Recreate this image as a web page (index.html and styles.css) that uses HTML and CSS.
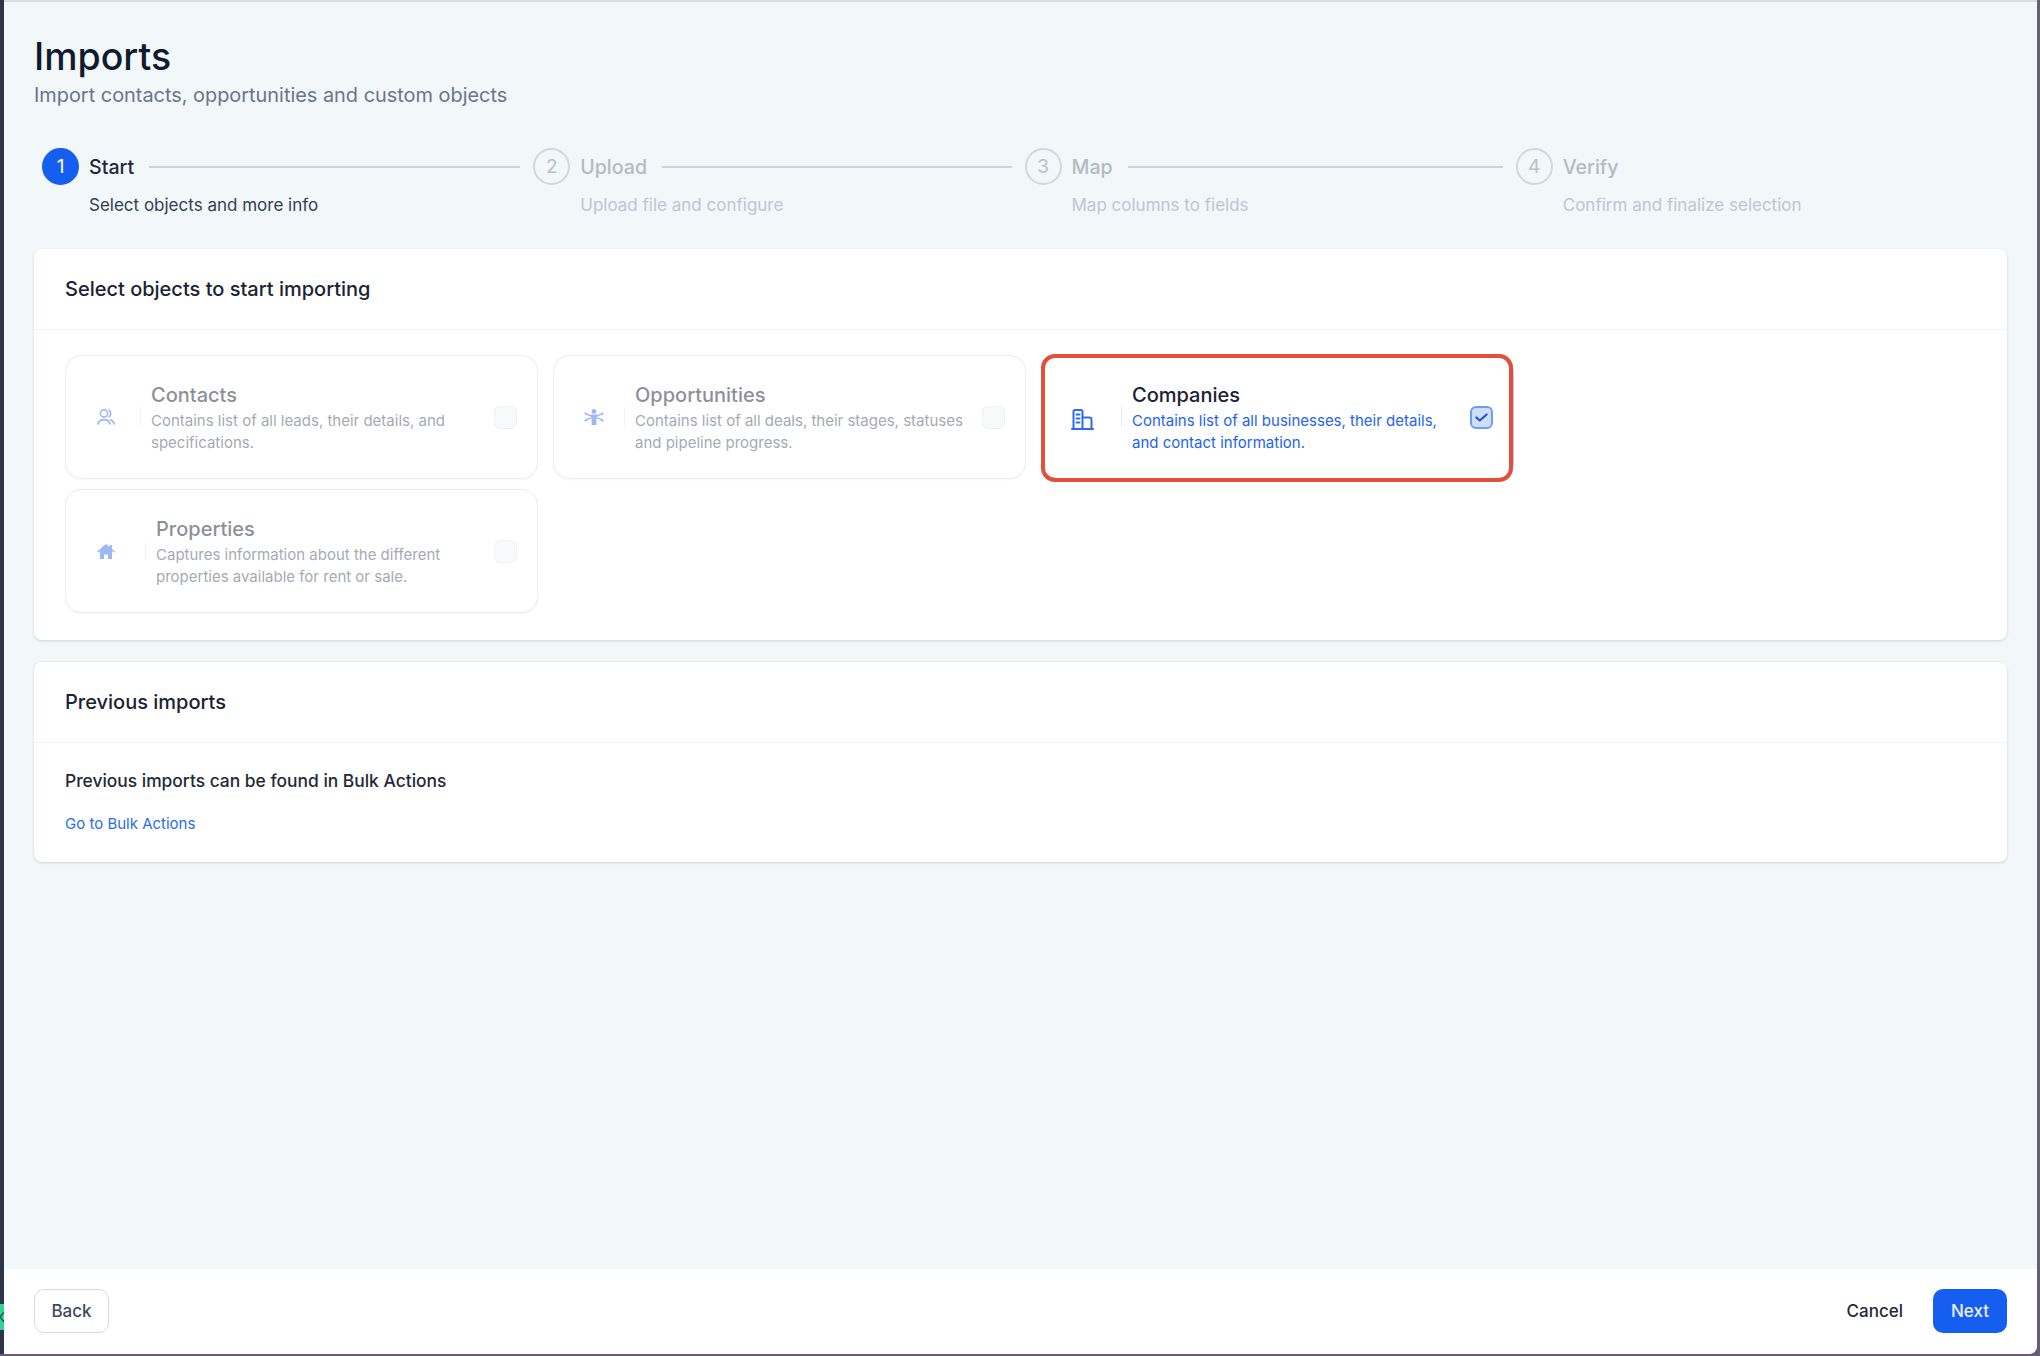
FILE: index.html
```html
<!DOCTYPE html>
<html lang="en">
<head>
    <meta charset="UTF-8">
    <meta name="viewport" content="width=device-width, initial-scale=1.0">
    <title>Imports</title>
    <link rel="stylesheet" href="styles.css">
</head>
<body>
<div class="window">
    <div class="side-tab"><svg viewBox="0 0 4 26" width="4" height="26"><path d="M4 8 L0 13 L4 18" fill="none" stroke="#1f5f4c" stroke-width="1.5"/></svg></div>
    <div class="main">
        <h1 class="title">Imports</h1>
        <div class="subtitle">Import contacts, opportunities and custom objects</div>

        <div class="steps">
            <div class="step active">
                <div class="step-head"><span class="step-num">1</span><span class="step-name">Start</span><span class="step-line"></span></div>
                <div class="step-desc">Select objects and more info</div>
            </div>
            <div class="step">
                <div class="step-head"><span class="step-num">2</span><span class="step-name">Upload</span><span class="step-line"></span></div>
                <div class="step-desc">Upload file and configure</div>
            </div>
            <div class="step">
                <div class="step-head"><span class="step-num">3</span><span class="step-name">Map</span><span class="step-line"></span></div>
                <div class="step-desc">Map columns to fields</div>
            </div>
            <div class="step">
                <div class="step-head"><span class="step-num">4</span><span class="step-name">Verify</span></div>
                <div class="step-desc">Confirm and finalize selection</div>
            </div>
        </div>

        <div class="card">
            <div class="card-header">Select objects to start importing</div>
            <div class="object-grid">
                <div class="object gap-contacts">
                    <div class="object-icon">
                        <svg viewBox="0 0 18 16" width="18" height="16" fill="none" stroke="#2563eb" stroke-width="1.6" stroke-linecap="round"><circle cx="7" cy="4.5" r="3.6"/><path d="M12 1.2a4 4 0 0 1 0 6.6"/><path d="M0.8 15c1-3 3.4-4.4 6.2-4.4s5.200 1.400 6.200 4.400"/><path d="M13.500 10.800c1.700.500 2.900 2 3.700 4.200"/></svg>
                    </div>
                    <span class="object-rule"></span>
                    <div class="object-text">
                        <div class="object-name">Contacts</div>
                        <div class="object-desc">Contains list of all leads, their details, and<br>specifications.</div>
                    </div>
                    <span class="check"></span>
                </div>
                <div class="object gap-opps">
                    <div class="object-icon">
                        <svg viewBox="0 0 20 16" width="20" height="16" fill="#2563eb"><circle cx="10" cy="2.400" r="2.400"/><path d="M6.800 5.600h6.400l-.8 5v5.400h-4.800v-5.400z"/><path d="M0 3.400l3.400.5-1.400 2.800zM20 3.400l-3.400.5 1.400 2.800zM0 12.400l3.400-.5-1.400-2.800zM20 12.400l-3.400-.5 1.400-2.800z"/><path d="M2.500 5.200l4.500 1.800M17.500 5.200l-4.500 1.800M2.500 10.600l4.500-1.800M17.500 10.600l-4.500-1.800" stroke="#2563eb" stroke-width="1.400"/></svg>
                    </div>
                    <span class="object-rule"></span>
                    <div class="object-text">
                        <div class="object-name">Opportunities</div>
                        <div class="object-desc">Contains list of all deals, their stages, statuses<br>and pipeline progress.</div>
                    </div>
                    <span class="check"></span>
                </div>
                <div class="object selected gap-wide">
                    <div class="object-icon">
                        <svg viewBox="0 0 23 21" width="23" height="21" fill="none" stroke="#2b6cf0" stroke-width="2" stroke-linecap="round" stroke-linejoin="round"><path d="M1 20h21"/><path d="M2.500 20V2.500a1.500 1.500 0 0 1 1.500-1.500h6a1.500 1.500 0 0 1 1.500 1.500V20"/><path d="M11.500 8.500h7a2 2 0 0 1 2 2V20"/><path d="M5.500 5.500h3M5.500 9.500h3M5.500 13.500h3"/></svg>
                    </div>
                    <span class="object-rule"></span>
                    <div class="object-text">
                        <div class="object-name">Companies</div>
                        <div class="object-desc">Contains list of all businesses, their details,<br>and contact information.</div>
                    </div>
                    <span class="check">
                        <svg viewBox="0 0 22 22" width="22" height="22" fill="none" stroke="#1d4fd8" stroke-width="2.400" stroke-linecap="round" stroke-linejoin="round"><path d="M5 11.500l4 3.500 8-7"/></svg>
                    </span>
                </div>
                <div class="object gap-wide">
                    <div class="object-icon">
                        <svg viewBox="0 0 18 15" width="18" height="15" fill="#2563eb"><path d="M9 0L0 7.500l1 1.200L3 7v8h4v-4.500h4V15h4V7l2 1.700 1-1.200-3-2.500V1h-2.500v1.900z"/></svg>
                    </div>
                    <span class="object-rule"></span>
                    <div class="object-text">
                        <div class="object-name">Properties</div>
                        <div class="object-desc">Captures information about the different<br>properties available for rent or sale.</div>
                    </div>
                    <span class="check"></span>
                </div>
            </div>
        </div>

        <div class="card">
            <div class="card-header">Previous imports</div>
            <div class="previous">
                <div class="previous-text">Previous imports can be found in Bulk Actions</div>
                <a class="previous-link" href="#">Go to Bulk Actions</a>
            </div>
        </div>
    </div>
    <div class="footer">
        <button type="button" class="btn btn-back">Back</button>
        <div class="footer-right">
            <button type="button" class="btn btn-cancel">Cancel</button>
            <button type="button" class="btn btn-next">Next</button>
        </div>
    </div>
</div>
</body>
</html>
```

FILE: styles.css
```css
* {
    box-sizing: border-box;
}
html, body {
    margin: 0;
    height: 100%;
}
body {
    background: #665f73;
    font-family: Inter, "Liberation Sans", sans-serif;
    color: #1a2233;
    overflow: hidden;
}
.window {
    position: relative;
    width: 2033px;
    height: 1354px;
    margin-left: 4px;
    display: flex;
    flex-direction: column;
    background: #f2f7fa;
    border-top: 2px solid #d9dde1;
    border-bottom-right-radius: 8px;
    box-shadow: -4px 0 0 #2d3648;
}
.side-tab {
    position: absolute;
    left: -4px;
    top: 1302px;
    width: 4px;
    height: 26px;
    background: #34d399;
    overflow: hidden;
}
.main {
    flex: 1;
    padding: 33px 30px 0 30px;
}
.title {
    margin: 0;
    font-size: 37.500px;
    line-height: 44px;
    font-weight: 500;
    color: #111a2e;
}
.subtitle {
    margin-top: 2px;
    font-size: 19.900px;
    line-height: 28px;
    color: #6b7489;
}

/* stepper */
.steps {
    display: grid;
    grid-template-columns: repeat(4, 1fr);
    margin-top: 39px;
    padding-left: 8px;
}
.step {
    padding-right: 13px;
}
.step-head {
    display: flex;
    align-items: center;
    height: 37px;
}
.step-num {
    flex: none;
    width: 37px;
    height: 37px;
    display: flex;
    align-items: center;
    justify-content: center;
    border: 2px solid #d3d8dc;
    border-radius: 50%;
    font-size: 19px;
    color: #b9c0c9;
}
.step-name {
    margin-left: 10px;
    font-size: 19.600px;
    font-weight: 500;
    color: #b4bac4;
}
.step-line {
    flex: 1;
    height: 2px;
    margin-left: 15px;
    background: #cdd3d8;
}
.step-desc {
    margin-top: 9px;
    padding-left: 47px;
    font-size: 17px;
    line-height: 22px;
    color: #c0c6cf;
}
.step.active .step-num {
    background: #155eef;
    border-color: #155eef;
    color: #fff;
}
.step.active .step-name {
    color: #1f2937;
}
.step.active .step-desc {
    color: #344054;
}

/* cards */
.card {
    margin-top: 33px;
    background: #fff;
    border-radius: 8px;
    box-shadow: 0 1px 3px rgba(16, 24, 40, .16);
}
.card + .card {
    margin-top: 22px;
}
.card-header {
    height: 81px;
    padding: 0 31px;
    display: flex;
    align-items: center;
    border-bottom: 1px solid #f1f3f5;
    font-size: 20px;
    font-weight: 500;
    color: #1a2233;
}
.object-grid {
    display: grid;
    grid-template-columns: repeat(3, 473px);
    grid-auto-rows: 124px;
    column-gap: 15px;
    row-gap: 10px;
    padding: 25px 31px 27px 31px;
}
.object {
    position: relative;
    display: flex;
    align-items: center;
    padding-left: 20px;
    background: #fff;
    border: 1px solid #eaecef;
    border-radius: 16px;
    box-shadow: 0 1px 2px rgba(16, 24, 40, .04);
}
.object-icon {
    flex: none;
    width: 40px;
    display: flex;
    justify-content: center;
    opacity: .45;
}
.object-rule {
    flex: none;
    width: 1px;
    height: 20px;
    background: #f1f3f5;
}
.gap-contacts .object-icon {
    margin-right: 14px;
}
.gap-opps .object-icon {
    margin-right: 10px;
}
.gap-wide .object-icon {
    margin-right: 19px;
}
.object-text {
    flex: 1;
    margin-left: 10px;
    opacity: .5;
}
.object-name {
    font-size: 20px;
    line-height: 29px;
    font-weight: 500;
    color: #1a2233;
}
.object-desc {
    font-size: 15px;
    line-height: 22px;
    color: #4a556b;
}
.check {
    flex: none;
    width: 23px;
    height: 23px;
    margin-right: 20px;
    display: flex;
    align-items: center;
    justify-content: center;
    background: #f8f9fa;
    border: 1px solid #eff1f3;
    border-radius: 6px;
}
.object.selected {
    border-color: #b9cdfb;
}
.object.selected::after {
    content: "";
    position: absolute;
    left: -1px;
    right: 0;
    top: -2px;
    bottom: -4px;
    border: 4px solid #e2503a;
    border-radius: 14px;
}
.object.selected .object-icon {
    opacity: 1;
    margin-top: 5px;
}
.object.selected .object-text {
    opacity: 1;
}
.object.selected .object-rule {
    background: #e4e7ec;
}
.object.selected .object-desc {
    color: #2463ee;
}
.object.selected .check {
    background: #cfdefd;
    border: 2px solid #6d9bf8;
}

/* previous imports */
.previous {
    height: 119px;
    padding: 26px 31px 0 31px;
}
.previous-text {
    font-size: 17.400px;
    line-height: 24px;
    font-weight: 500;
    color: #1f2937;
}
.previous-link {
    display: block;
    margin-top: 21px;
    font-size: 15px;
    line-height: 20px;
    color: #2b6cf0;
    text-decoration: none;
}

/* footer */
.footer {
    flex: none;
    height: 85px;
    padding: 20px 30px 0 30px;
    display: flex;
    justify-content: space-between;
    align-items: flex-start;
    background: #fff;
    border-bottom-right-radius: 8px;
}
.footer-right {
    display: flex;
    gap: 30px;
    align-items: center;
}
.btn {
    height: 44px;
    font-family: inherit;
    font-size: 17px;
    font-weight: 500;
    border-radius: 10px;
    cursor: pointer;
}
.btn-back {
    width: 75px;
    background: #fff;
    border: 1px solid #d5d9e0;
    color: #3f4a5f;
}
.btn-cancel {
    padding: 0;
    background: none;
    border: none;
    color: #1f2937;
}
.btn-next {
    width: 74px;
    background: #155eef;
    border: none;
    color: #e8efff;
}
```
